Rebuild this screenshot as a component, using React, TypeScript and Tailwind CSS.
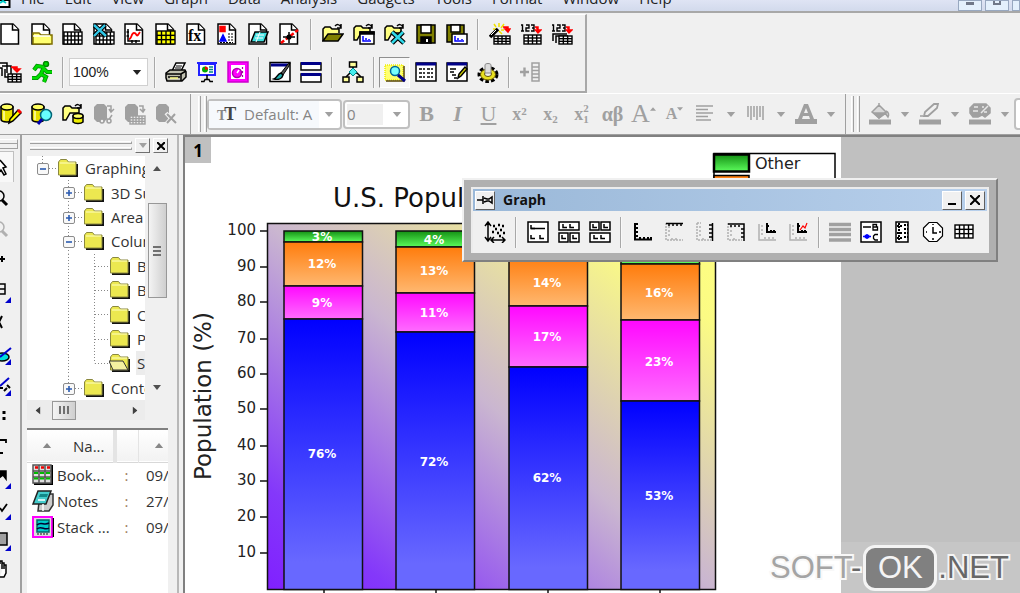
import type { ReactNode } from "react";

/* ---------- icon building blocks ---------- */

type GridProps = { x: number; y: number; w: number; h: number; cols?: number; rows?: number; fill?: string; stroke?: string };

function Grid({ x, y, w, h, cols = 4, rows = 3, fill = "#fff", stroke = "#000" }: GridProps) {
  return (
    <g stroke={stroke} strokeWidth="1.4">
      <rect x={x} y={y} width={w} height={h} fill={fill} />
      {Array.from({ length: cols - 1 }, (_, i) => {
        const px = x + (w / cols) * (i + 1);
        return <path key={"c" + i} d={`M${px} ${y}V${y + h}`} />;
      })}
      {Array.from({ length: rows - 1 }, (_, i) => {
        const py = y + (h / rows) * (i + 1);
        return <path key={"r" + i} d={`M${x} ${py}H${x + w}`} />;
      })}
    </g>
  );
}

function Page({ children }: { children?: ReactNode }) {
  return (
    <>
      <path d="M1 1h12l5.5 5.500V21H1z" fill="#fff" />
      <path d="M12.500 1v6h6" fill="#fff" />
      {children}
    </>
  );
}

const cylinder = (
  <>
    <path d="M1 4v12c0 2 3 3 6 3s6-1 6-3V4z" fill="#e8e000" />
    <ellipse cx="7" cy="4" rx="6" ry="3" fill="#ffff60" />
    <path d="M4 8v9" stroke="#ffffb0" />
  </>
);
const grayCylinder = (
  <path d="M1 4l3-3h7l3 3v12l-3 3H4l-3-3z" fill="#a0a0a0" stroke="none" />
);
const openFolder = (
  <>
    <path d="M1 18V6l2-2h5l2 2h7v4" fill="#ffff80" />
    <path d="M1 18l5-7h15l-5 7z" fill="#808000" />
    <path d="M13 3c2-2 4-2 6 1M19 1v4h-4" />
  </>
);
const yellowFolder = (
  <>
    <path d="M1 17V5l2-2h5l2 2h7v5H8l-4 7z" fill="#ffff80" />
    <path d="M13 3c2-2 4-2 6 1M19 1v4h-4" />
  </>
);
const redArrow = <path d="M15 4h3v4M15.500 7l2.500 3 3-3z" stroke="#f00" fill="#f00" />;
const digits = (
  <path d="M1 2h1.500v6M1 8h3M6 2h3v3H6v3h3.500M11 2h3v6h-3M12 5h2" strokeWidth="1.400" />
);
const axisL = (color: string, x = 3, y = 19) => (
  <path d={`M${x} 3V${y}H20M${x + 2} 5h2M${x + 2} 9h2M${x + 2} 13h2M${x + 6} ${y - 1}v-2M${x + 10} ${y - 1}v-2M${x + 14} ${y - 1}v-2`} stroke={color} />
);
const smallL = (x: number, y: number) => <path d={`M${x} ${y}v3.5h4`} />;

const icons: Record<string, ReactNode> = {
  "New Project": <Page />,
  "New Folder": <Page><path d="M2 10h6l2 2h11v9H2z" fill="#ffff70" stroke="#807000" /><path d="M2 13h17" stroke="#fff" /></Page>,
  "New Workbook": <Page><Grid x={2} y={9} w={18} h={12} cols={5} /></Page>,
  "New Excel": <Page><Grid x={3} y={9} w={18} h={12} cols={5} /><path d="M1 2l12 11M12 2L1 13" stroke="#000" strokeWidth="4.5" /><path d="M1 2l12 11M12 2L1 13" stroke="#30c8e8" strokeWidth="2.4" /></Page>,
  "New Graph": <Page><path d="M4 6v12h12M2.500 9H5M2.500 13H5M8 17v3M12 17v3" /><path d="M5 16c3 0 2-6 5-6s2 4 4 2l2-3" stroke="#f00" strokeWidth="1.800" /></Page>,
  "New Matrix": <Page><Grid x={2} y={8} w={18} h={13} cols={4} fill="#ff0" /></Page>,
  "New Function": <Page><text x="2" y="18" fontSize="16" fontWeight="bold" fontFamily="Liberation Serif, serif" fill="#000" stroke="none">fx</text></Page>,
  "New Layout": <Page><path d="M3 3.500h5v5H3z" fill="#f00" stroke="#f00" /><path d="M3 18l3-6 3 6z" fill="#00f" stroke="#00f" /><path d="M11 11h5M11 14h5M3 19.500h13M11 17h5" strokeDasharray="2 1" strokeWidth="1" /></Page>,
  "New Notes": <Page><path d="M7 9h13l-4 10H3z" fill="#40e0e0" /><path d="M8 12h8M7 15h8M12 9L8 19" stroke="#fff" strokeWidth="1" /></Page>,
  "Digitize": <Page><path d="M2 20L19 7" stroke="#f00" strokeWidth="2.400" strokeDasharray="4 2" /><path d="M10 9v11M4 14h12" /><circle cx="10" cy="14" r="1.800" fill="#000" /></Page>,
  "Open": openFolder,
  "Open Template": <>{yellowFolder}<path d="M7 9h14v12H7z" fill="#fff" /><path d="M7 9h14v2H7z" fill="#000" /><path d="M10 13v5h8M13 17v-2M16 17v-1" stroke="#00f" /></>,
  "Open Excel": <>{yellowFolder}<path d="M8 9l12 11M19 9L8 20" strokeWidth="5" /><path d="M8 9l12 11M19 9L8 20" stroke="#30d8e8" strokeWidth="2.500" /></>,
  "Save Project": <><path d="M2 2h18v18H2z" fill="#808000" /><path d="M6 2h10v8H6z" fill="#fff" /><path d="M6 14h10v6H6z" fill="#000" /><path d="M12 16v3" stroke="#fff" strokeWidth="2" /></>,
  "Save Template": <><path d="M1 2h17v17H1z" fill="#808000" /><path d="M5 2h9v7H5z" fill="#fff" /><path d="M6 11h15v10H6z" fill="#fff" /><path d="M9 13v5h9M12 17v-2M16 17v-1" stroke="#00f" /></>,
  "Import Wizard": <><path d="M5 1l2 3M10 0v4M15 1l-3 4M12 7h3M10 8l3 3M4 6h3" stroke="#f0e000" strokeWidth="1.500" /><path d="M1 14l8-8" strokeWidth="3.500" /><path d="M2 12l5-5" stroke="#fff" strokeWidth="1" /><Grid x={5} y={13} w={16} h={8} cols={4} /><path d="M14 4h5v3M16 6l3 3 2-3z" stroke="#f00" fill="#f00" /></>,
  "Import Single": <>{digits}<Grid x={4} y={12} w={17} h={9} cols={4} />{redArrow}</>,
  "Import Multiple": <>{digits}<path d="M2 18v-7h14" /><path d="M5 20v-7h12" /><Grid x={8} y={13} w={13} h={8} cols={3} />{redArrow}</>,

  "Recalculate": <><path d="M-2 2h9v10M-2 7h4v8M2 5h9v8M5 8v8h4" fill="#fff" /><Grid x={8} y={13} w={13} h={8} cols={3} /><path d="M11 6h6v4M14 8l3 3 3-3z" stroke="#f00" fill="#f00" /></>,
  "Run": <><circle cx="15" cy="3" r="2.500" fill="#0d0" stroke="#080" /><path d="M13 6L6 5 3 9M13 6l-3 7 5 3-2 5M10 13l-4 4H1M13 8l3 3h5" stroke="#080" strokeWidth="4.200" /><path d="M13 6L6 5 3 9M13 6l-3 7 5 3-2 5M10 13l-4 4H1M13 8l3 3h5" stroke="#0d0" strokeWidth="2.600" /></>,
  "Print": <><path d="M7 10l4-8h9l-4 8z" fill="#fff" /><path d="M11 5h6M10 7h6" strokeWidth="1" /><path d="M1 12l4-3h15l1 2v5l-4 4H2l-1-3z" fill="#c0c0b0" /><path d="M1 13h15l5-3M3 16h12M16 13v7" /><path d="M5 17h8" stroke="#ff8" /></>,
  "Slide Show": <><path d="M1 2h20M3 3h16v11H3z" fill="#fff" stroke="#22f" strokeWidth="2" /><circle cx="9" cy="8.500" r="3" fill="#0a0" stroke="none" /><path d="M9 8.500V5.500a3 3 0 013 3z" fill="#f00" stroke="none" /><path d="M13 6h4M13 8.500h4M13 11h4" stroke="#088" /><path d="M11 14v5M5 20.500h3l1-2h4l1 2h3" /></>,
  "Video Builder": <><path d="M1 1h20v20H1z" fill="#f0f" stroke="#c0c" /><path d="M4 4h14v14H4z" fill="#fff" stroke="none" /><circle cx="10" cy="12" r="4.500" fill="#f0f" stroke="#a0a" /><path d="M10 12l2-3" stroke="#fff" /><path d="M15.500 6v2M15.500 10v2M15.500 14v2" stroke="#a0a" strokeWidth="1.200" /></>,
  "Edit Mode": <><path d="M1 1.500h20v19H1z" fill="#fff" /><path d="M2 2.500h18v3H2z" fill="#008" stroke="none" /><path d="M12 12l7-9 2-1-1 3-6 9z" fill="#555" strokeWidth="1" /><path d="M5 18c3-1 3-5 7-6l2 2c-1 4-5 5-9 4z" fill="#20b0b0" /></>,
  "Tile": <><path d="M1 2h20v7H1zM1 13h20v8H1z" fill="#fff" /><path d="M1 2.500h20M1 13.500h20" stroke="#008" strokeWidth="3" /></>,
  "Flow": <><path d="M11 6v9M4 16l4-4h7l4 4" /><path d="M7.500 1h7v5h-7zM1 16h6v5H1zM15 16h6v5h-6z" fill="#ff9" /><path d="M11 7l4 4-4 4-4-4z" fill="#4ee" stroke="#088" strokeWidth="1" /></>,
  "Project Explorer": <><path d="M1 4h18v15H1z" fill="#ffff70" stroke="#ee0" strokeDasharray="1 1" /><path d="M2 20h18V5" stroke="#540" /><circle cx="11" cy="10" r="4.500" fill="#7ff" stroke="#069" /><path d="M14 14l7 6" stroke="#008" strokeWidth="3" /></>,
  "Results Log": <><path d="M1 2h20v18H1z" fill="#fff" /><path d="M1 3h20" stroke="#008" strokeWidth="3" /><path d="M4 8h6M12 8h6M4 12h6M12 12h6M4 16h6M12 16h6" strokeDasharray="3 1" /></>,
  "Script Window": <><path d="M1 2h20v18H1z" fill="#fff" /><path d="M1 3h20" stroke="#008" strokeWidth="3" /><path d="M4 8h6M4 11h4M6 14h4M8 17h3" /><path d="M12 17l1-4 6-7 2 2-6 7z" fill="#cc0" /></>,
  "Code Builder": <><ellipse cx="11" cy="13.500" rx="8.500" ry="6.500" stroke="#000" strokeWidth="4" strokeDasharray="3.400 2" /><ellipse cx="11" cy="13.500" rx="7.500" ry="5.500" fill="#e8e020" stroke="#665500" strokeWidth="1" /><ellipse cx="11" cy="13" rx="3.500" ry="2.500" fill="#eee" stroke="#665500" strokeWidth="1" /><path d="M8 4c0-2 6-2 6 0v8H8z" fill="#ddd" stroke="#888" strokeWidth="1" /></>,
  "Add Columns": <g stroke="#a0a0a0"><path d="M1 11h9M5.500 6.500v9" strokeWidth="2.400" /><path d="M13 2h7v18h-7zM13 6h7M13 9.500h7M13 13h7M13 16.500h7" /></g>,

  "Edit Data": <>{cylinder}<path d="M9 20l1-4 8-9 3 3-8 8z" fill="#ff0" /><path d="M18 7l3 3" stroke="#f00" strokeWidth="3" /></>,
  "Find Data": <>{cylinder}<circle cx="15" cy="12" r="5.500" fill="#6ff" stroke="#067" /><path d="M11 16l-4 5" stroke="#00a" strokeWidth="3" /></>,
  "Open Data": <>{yellowFolder}<path d="M11 13v6c2 2 8 2 10 0v-6z" fill="#ee0" /><ellipse cx="16" cy="13" rx="5" ry="2.500" fill="#ff6" /></>,
  "Link Data": <>{grayCylinder}<path d="M14 3h4v5M16 6l2 3 3-3M8 18l4-6 3 6 4-6" stroke="#a0a0a0" /><circle cx="9" cy="18" r="2" fill="#f0f0f0" stroke="#a0a0a0" /><circle cx="16" cy="18" r="2" fill="#f0f0f0" stroke="#a0a0a0" /></>,
  "Import Table": <>{grayCylinder}<Grid x={6} y={13} w={15} h={8} cols={5} stroke="#a0a0a0" fill="#f0f0f0" /><path d="M15 3h4v5M16 6l3 3 2-3" stroke="#a0a0a0" /></>,
  "Remove Data": <>{grayCylinder}<path d="M11 10l10 11M20 11L11 21" stroke="#f0f0f0" strokeWidth="4" /><path d="M12 11l9 9M20 11l-8 9" stroke="#a0a0a0" strokeWidth="2" /></>,

  "Rescale": <><path d="M4 2v17M1 5l3-4 3 4M1 16l3 4 3-4M7 19h14M18 16l3 3-3 3M10 16l-3 3 3 3" /><path d="M9 5h2M14 4h2M18 5h2M11 8h2M16 9h2M8 11h2M13 12h2M19 12h2M15 15h2" strokeWidth="2.500" /></>,
  "One Over Two": <><path d="M1 1h20v20H1z" fill="#fff" />{smallL(4, 4)}<path d="M4 7.500h14" />{smallL(4, 14)}{smallL(13, 14)}</>,
  "Wide Top": <><path d="M1 1h20v8H1zM1 12h9v9H1zM12 12h9v9h-9z" fill="#fff" />{smallL(5, 3)}{smallL(12, 3)}{smallL(4, 14)}{smallL(15, 14)}</>,
  "Wide Bottom": <><path d="M1 1h9v8H1zM12 1h9v8h-9zM1 12h20v9H1z" fill="#fff" />{smallL(4, 3)}{smallL(15, 3)}{smallL(5, 14)}{smallL(12, 14)}</>,
  "Bottom Left Axes": <path d="M3 2v16.500h17M4 3h2M4 7h2M4 11h2M4 15h2M8 18v-2M12 18v-2M16 18v-2M19 18v-2" strokeWidth="2" />,
  "Top Axis": <><path d="M3 2v17h17M5 6h2M5 10h2M5 14h2M9 17v2M13 17v2" stroke="#b0b0b0" strokeDasharray="2 1" /><path d="M3 2.500h17M6 3v2M10 3v2M14 3v2M18 3v2" strokeWidth="1.500" /></>,
  "Right Axis": <><path d="M3 2v17h14M3 2h4M5 6h2M5 10h2M5 14h2M9 17v2" stroke="#b0b0b0" strokeDasharray="2 1" /><path d="M18.500 2v18M15 4h3M15 8h3M15 12h3M15 16h3" strokeWidth="1.500" /></>,
  "Top Right Axes": <><path d="M3 2v17h14M5 6h2M5 10h2M5 14h2M9 17v2" stroke="#b0b0b0" strokeDasharray="2 1" /><path d="M3 3h16v17M6 4v2M10 4v2M14 4v2M16 8h3M16 12h3M16 16h3" strokeWidth="1.500" /></>,
  "Inset Axes": <>{axisL("#b0b0b0")}<path d="M11 2v9h9M11 5h2M15 9v2M18 9v2" strokeWidth="2" /></>,
  "Inset Plot": <>{axisL("#b0b0b0")}<path d="M11 2v9h9M11 5h2M15 9v2M18 9v2" strokeWidth="2" /><path d="M13 9l3-4 2 2 2-5" stroke="#f00" strokeWidth="1.200" /></>,
  "Merge": <path d="M0 3.500h22M0 8.500h22M0 13.500h22M0 19h22" stroke="#a0a0a0" strokeWidth="3.500" />,
  "New Legend": <><path d="M1 1h20v20H1z" fill="#fff" /><path d="M3 6h8" strokeWidth="1.500" /><path d="M3 15.500h8M7 13v5M5.500 14.500h3v2h-3z" stroke="#00f" strokeWidth="1.500" /><path d="M13 3.500h3.500v2.500H13zM13 6h4.500v3H13z" strokeWidth="1.300" /><path d="M18 13.500h-3l-1.500 1.500v2.500l1.500 1.500h3" strokeWidth="1.300" /></>,
  "Color Scale": <><path d="M5 1h12v20H5z" fill="#fff" /><path d="M8 2v18M13 4h4M13 8h4M13 12h4M13 16h4M6 5h5M6 12h5M6 17h5" strokeWidth="2" strokeDasharray="2 1" /></>,
  "Date and Time": <><path d="M7 1.500h8l5.500 5.500v8L15 20.500H7L1.500 15V7z" fill="#fff" strokeWidth="1.200" /><path d="M11 6v6h4M11 3v1M11 17v2M4 11h1M17 11h2" /></>,
  "New Table": <Grid x={2} y={4} w={18} h={13} cols={4} rows={3} />,

  "Fill Color": <g stroke="#a0a0a0"><path d="M3 9l7-7 7 7-7 6zM10 2V0M17 8c3 1 3 4 2 6l-3-4" fill="#d8d8d8" /><path d="M5 10h12l-7 5z" fill="#a0a0a0" /><path d="M0 19h22" strokeWidth="5" /></g>,
  "Line Color": <g stroke="#a0a0a0"><path d="M5 13l1-4 9-8h4l-1 4-9 8z" fill="#f0f0f0" strokeWidth="1.800" /><path d="M1 13h3" /><path d="M0 19h22" strokeWidth="5" /></g>,
  "Palette": <g stroke="#a0a0a0"><path d="M5 1h12l4 4v5l-5 4-3-2-4 2H4L1 10V5z" fill="#a0a0a0" /><path d="M5 4h4M4 8h5M12 10l7-7M13 4h2M15 9h3" stroke="#e8e8e8" /><path d="M0 19h22" strokeWidth="5" /></g>,
  "Font Color": <g stroke="none" fill="#a0a0a0"><path d="M9 1h4l6 15h-4l-1-3H8l-1 3H3zM9 10h4l-2-5z" fillRule="evenodd" /><path d="M0 16h22v5H0z" /></g>,
  "Align": <path d="M1 3h17M1 6.500h12M1 10h17M1 13.500h12M1 17h15" stroke="#a0a0a0" />,
  "Spacing": <path d="M3 3v11M6 3v14M9 3v11M12 3v14M15 3v11M18 3v14" stroke="#a0a0a0" />,
};

function Icon({ name }: { name: string }) {
  return (
    <svg className="size-[22px] shrink-0" viewBox="0 0 22 22" fill="none" stroke="#000" strokeWidth="1.5" aria-hidden="true">
      {icons[name]}
    </svg>
  );
}

function ToolButton({ name, pressed = false, children }: { name: string; pressed?: boolean; children?: ReactNode }) {
  return (
    <button
      type="button"
      aria-label={name}
      className={
        pressed
          ? "flex h-[31px] w-[31px] shrink-0 items-center justify-center border border-t-[#909090] border-l-[#909090] border-r-white border-b-white bg-[#f8f8f8]"
          : "flex h-[31px] w-[31px] shrink-0 items-center justify-center"
      }
    >
      {children ?? <Icon name={name} />}
    </button>
  );
}

const Tools = ({ names }: { names: string[] }) => <>{names.map((n) => <ToolButton key={n} name={n} />)}</>;

function Sep({ narrow = false }: { narrow?: boolean }) {
  return (
    <span className={narrow ? "flex w-[11px] shrink-0 justify-center" : "flex w-3 shrink-0 justify-center"}>
      <span className="h-[31px] w-0.5 border-r border-l border-l-[#a8a8a8] border-r-[#f8f8f8]" />
    </span>
  );
}

function Triangle({ className }: { className: string }) {
  return (
    <svg className={className} viewBox="0 0 10 6" aria-hidden="true">
      <path d="M0 0h10L5 6z" fill="currentColor" />
    </svg>
  );
}

function DropTool({ name }: { name: string }) {
  return (
    <div className="flex shrink-0 items-center">
      <ToolButton name={name} />
      <button type="button" aria-label={name + " options"} className="flex h-[31px] w-[19px] items-center justify-center text-[#a0a0a0]">
        <Triangle className="h-[5px] w-[10px]" />
      </button>
    </div>
  );
}

function Grip() {
  return (
    <span className="flex shrink-0 gap-[3px] self-stretch py-0.5">
      <span className="w-[3px] border-r border-l border-l-white border-r-[#a0a0a0]" />
      <span className="w-[3px] border-r border-l border-l-white border-r-[#a0a0a0]" />
    </span>
  );
}

/* ---------- header ---------- */

const menus = ["File", "Edit", "View", "Graph", "Data", "Analysis", "Gadgets", "Tools", "Format", "Window", "Help"];

function MenuBar() {
  return (
    <nav className="flex h-[13px] shrink-0 items-end overflow-hidden border-b-2 border-[#a8a8a8] bg-gradient-to-b from-[#dfe4f4] to-[#d2daec]">
      <svg className="h-[11px] w-[11px]" viewBox="0 0 11 11" aria-hidden="true">
        <path d="M0 0h9.500v7H0" fill="#fff" stroke="#000" strokeWidth="2" />
        <path d="M0 3l3-2 3 2" stroke="#0cc" strokeWidth="2" fill="none" />
      </svg>
      <div className="flex gap-5 pb-[3px] pl-[10px] text-[15px] leading-5">
        {menus.map((m) => (
          <button type="button" key={m}>{m}</button>
        ))}
      </div>
      <div className="ml-auto flex gap-[3px]">
        {["Minimize", "Restore", "Close"].map((n, i) => (
          <button type="button" key={n} aria-label={n} className={i === 2 ? "h-[11px] w-2 border border-[#98a8c0] bg-[#e4f0fc]" : "flex h-[11px] w-6 justify-center border border-[#98a8c0] bg-[#e4f0fc]"}>
            {i === 0 && <span className="mt-px h-[3px] w-2 bg-[#707888]" />}
            {i === 1 && <span className="h-1 w-2 border-2 border-t-0 border-[#707888]" />}
          </button>
        ))}
      </div>
    </nav>
  );
}

function MainToolbars() {
  return (
    <div className="mt-px w-[587px] shrink-0 border-r-2 border-b-2 border-[#a8a8a8] border-t border-t-white">
      <div className="-ml-[5px] flex h-[38px] items-center">
        <Tools names={["New Project", "New Folder", "New Workbook", "New Excel", "New Graph", "New Matrix", "New Function", "New Layout", "New Notes", "Digitize"]} />
        <Sep />
        <Tools names={["Open", "Open Template", "Open Excel", "Save Project", "Save Template"]} />
        <Sep />
        <Tools names={["Import Wizard", "Import Single", "Import Multiple"]} />
      </div>
      <div className="-ml-[5px] flex h-[38px] items-center">
        <Tools names={["Recalculate", "Run"]} />
        <Sep narrow />
        <label className="relative mx-px flex h-7 w-[79px] shrink-0 items-center">
          <select aria-label="Zoom" className="h-full w-full appearance-none border border-[#d0d0d0] bg-white pl-[3px] font-['Liberation_Sans',sans-serif] text-sm text-[#222]">
            <option>100%</option>
          </select>
          <Triangle className="pointer-events-none absolute right-1.5 h-[5px] w-[10px]" />
        </label>
        <Sep narrow />
        <Tools names={["Print", "Slide Show", "Video Builder"]} />
        <Sep narrow />
        <Tools names={["Edit Mode", "Tile"]} />
        <Sep narrow />
        <Tools names={["Flow"]} />
        <Sep narrow />
        <ToolButton name="Project Explorer" pressed />
        <Tools names={["Results Log", "Script Window", "Code Builder"]} />
        <Sep narrow />
        <Tools names={["Add Columns"]} />
      </div>
    </div>
  );
}

function FormatBar() {
  const serif = "font-['Liberation_Serif',serif] text-[#a0a0a0] font-bold";
  return (
    <div className="flex h-[41px] shrink-0 items-center overflow-hidden border-t border-white">
      <div className="-ml-[5px] flex w-[196px] shrink-0 items-center self-stretch border-r border-[#a0a0a0]">
        <Tools names={["Edit Data", "Find Data", "Open Data", "Link Data", "Import Table", "Remove Data"]} />
      </div>
      <div className="flex shrink-0 items-center self-stretch border-r border-[#a0a0a0] pr-[5px] pl-[7px]">
        <Grip />
        <label className="relative flex h-[31px] w-[135px] items-center rounded-sm border-2 border-[#c0c0c0] bg-white">
          <span className="pointer-events-none absolute left-2 font-['Liberation_Serif',serif] text-[#444]">
            <b className="text-sm text-[#888]">T</b><b className="-ml-0.5 text-lg">T</b>
          </span>
          <select aria-label="Font" className="h-full w-[110px] appearance-none overflow-hidden bg-[#f6f9fc] pl-[35px] text-[15px] text-[#858585]">
            <option>Default: A</option>
          </select>
          <Triangle className="pointer-events-none absolute right-1.5 h-[5px] w-[10px] text-[#a0a0a0]" />
        </label>
        <label className="relative ml-px flex h-[29px] w-[67px] items-center rounded-sm border-2 border-[#c0c0c0] bg-white">
          <select aria-label="Font size" className="m-0.5 h-[21px] w-9 appearance-none bg-[#f0f0f0] text-[15px] leading-5 text-[#858585]">
            <option>0</option>
          </select>
          <Triangle className="pointer-events-none absolute right-1.5 h-[5px] w-[10px] text-[#a0a0a0]" />
        </label>
        <div className={"ml-px flex items-center text-[22px] leading-none " + serif}>
          <ToolButton name="Bold"><b>B</b></ToolButton>
          <ToolButton name="Italic"><i>I</i></ToolButton>
          <ToolButton name="Underline"><u className="font-normal">U</u></ToolButton>
          <ToolButton name="Superscript"><span className="text-lg">x<sup className="text-[11px]">2</sup></span></ToolButton>
          <ToolButton name="Subscript"><span className="text-lg">x<sub className="text-[11px]">2</sub></span></ToolButton>
          <ToolButton name="Super and subscript">
            <span className="text-lg">x</span>
            <span className="flex flex-col text-[11px] leading-[11px]"><span>2</span><span>1</span></span>
          </ToolButton>
          <ToolButton name="Greek"><span className="text-xl">αβ</span></ToolButton>
          <ToolButton name="Increase font">
            <span className="text-[26px] font-normal">A</span><Triangle className="mt-2 h-1 w-1.5 rotate-180 self-start" />
          </ToolButton>
          <ToolButton name="Decrease font">
            <span className="text-base">A</span><Triangle className="mt-2 h-1 w-1.5 self-start" />
          </ToolButton>
        </div>
        <DropTool name="Align" />
        <DropTool name="Spacing" />
        <DropTool name="Font Color" />
      </div>
      <div className="flex shrink-0 items-center self-stretch pl-[5px]">
        <Grip />
        <span className="w-1" />
        <DropTool name="Fill Color" />
        <DropTool name="Line Color" />
        <DropTool name="Palette" />
        <span className="h-8 w-4 rounded-sm border-2 border-[#c0c0c0] bg-white" />
      </div>
    </div>
  );
}

/* ---------- left side ---------- */

const corner = <path d="M11 27V21L5 27z" fill="#00c" stroke="none" />;
const paletteTools: [string, ReactNode][] = [
  ["Pointer", <path d="M0 8l6 7-3 1 3 6-2 1-3-5-1 2" fill="#fff" />],
  ["Zoom in", <><circle cx="-1" cy="13" r="5" /><path d="M2 17l5 5" strokeWidth="3" /></>],
  ["Zoom out", <g stroke="#b0b0b0"><circle cx="-1" cy="13" r="5" /><path d="M2 17l5 5" strokeWidth="3" /></g>],
  ["Reader", <path d="M0 14h5M2 11v6" strokeWidth="2" />],
  ["Selector", <><path d="M-2 8h7v10h-7M0 13h5" />{corner}</>],
  ["Cursor", <path d="M2 9l-3 6 3 6" strokeWidth="2" />],
  ["Mask", <><ellipse cx="2" cy="19" rx="7" ry="4" fill="#0dd" /><path d="M0 19L11 10" stroke="#00c" strokeWidth="2" />{corner}</>],
  ["Region", <><path d="M0 19h3M4 22l3-3M7 16l3 3" strokeWidth="2" /><path d="M0 17L9 9" stroke="#00c" strokeWidth="2" />{corner}</>],
  ["Draw data", <path d="M4 11v3M4 17v3" strokeWidth="3" />],
  ["Text", <path d="M0 9h6v3M-1 22h4" strokeWidth="1.800" />],
  ["Arrow", <><path d="M0 9h6v8l-3-4-4 3z" fill="#000" />{corner}</>],
  ["Line", <><path d="M0 15l2 3 5-7" strokeWidth="1.800" />{corner}</>],
  ["Rectangle", <><path d="M-2 9h9v12h-9z" fill="#a0a0a0" />{corner}</>],
  ["Hand", <path d="M0 9V6h2v8M2 8h2v6M4 10h2v8l-2 4H0" fill="#fff" />],
];

function ToolPalette() {
  return (
    <aside className="flex w-[22px] shrink-0 flex-col overflow-hidden border-r-2 border-[#a0a0a0] pt-1">
      <span className="h-[5px] w-[18px] border-r border-b border-t border-t-white border-[#a0a0a0]" />
      <span className="mb-0.5 h-[5px] w-[18px] border-r border-b border-[#a0a0a0]" />
      {paletteTools.map(([name, art], i) => (
        <button type="button" key={name} aria-label={name} className={i === 0 ? "h-[31px] w-[14px] shrink-0 border-t border-r border-[#c0c0c0] bg-[#f8f8f8]" : "h-[31px] w-[14px] shrink-0"}>
          <svg className="h-[30px] w-[13px]" viewBox="0 0 13 30" fill="none" stroke="#000" strokeWidth="1.5" aria-hidden="true">{art}</svg>
        </button>
      ))}
    </aside>
  );
}

type TreeRow = { label: string; level: number; box?: "+" | "-"; open?: boolean };
const tree: TreeRow[] = [
  { label: "Graphing", level: 0, box: "-" },
  { label: "3D Surface", level: 1, box: "+" },
  { label: "Area", level: 1, box: "+" },
  { label: "Column", level: 1, box: "-" },
  { label: "Bar", level: 2 },
  { label: "Bar", level: 2 },
  { label: "Column", level: 2 },
  { label: "Pie", level: 2 },
  { label: "Stack", level: 2, open: true },
  { label: "Contour", level: 1, box: "+" },
];

function Guide({ down = true, across = false, box }: { down?: boolean; across?: boolean; box?: "+" | "-" }) {
  return (
    <svg className="h-full w-[26px] shrink-0" aria-hidden="true">
      <g stroke="#888" strokeDasharray="1 2" fill="none">
        <line x1="12.500" y1="0" x2="12.500" y2={down ? "100%" : "50%"} />
        {across && <line x1="13" y1="12.500" x2="26" y2="12.500" />}
      </g>
      {box && (
        <g stroke="#8c8c8c">
          <rect x="7.500" y="7.500" width="11" height="11" rx="1.500" fill="#f8f8f8" />
          <path d={box === "+" ? "M10 13h6M13 10v6" : "M10 13h6"} stroke="#2a5ab0" strokeWidth="1.600" />
        </g>
      )}
    </svg>
  );
}

function FolderIcon({ open }: { open?: boolean }) {
  return (
    <svg className="ml-px h-5 w-[22px] shrink-0" viewBox="0 0 22 20" aria-hidden="true">
      <path d="M3 18h17V6" fill="none" stroke="#111" strokeWidth="2" />
      <path d="M1.500 17V4l2-2.500h6l2 2.500h7.500v13z" fill="#ece850" stroke="#8a8840" />
      <path d="M3 5h15" stroke="#ffffc0" />
      {open && <path d="M0 8h14l5 9H4z" fill="#f4f0a0" stroke="#333" />}
    </svg>
  );
}

const scrollThumb = "border border-[#989898] bg-gradient-to-r from-[#f4f4f4] to-[#cfcfcf]";

function ProjectPanel() {
  return (
    <section className="ml-0.5 flex w-[155px] shrink-0 flex-col border-r-2 border-[#b8b8b8] pr-[9px] pl-[3px]">
      <header className="flex h-[21px] shrink-0 items-center gap-[3px] pl-[3px]">
        <span className="flex flex-1 flex-col gap-[3px]">
          <span className="h-[3px] border-r border-b border-t border-t-white border-[#a0a0a0]" />
          <span className="h-[3px] border-r border-b border-t border-t-white border-[#a0a0a0]" />
        </span>
        <button type="button" aria-label="Panel menu" className="flex h-[15px] w-[15px] items-center justify-center border border-t-white border-l-white border-r-[#707070] border-b-[#707070] text-[#a0a0a0]">
          <Triangle className="h-[5px] w-2" />
        </button>
        <button type="button" aria-label="Close panel" className="flex h-[15px] w-[15px] items-center justify-center border border-t-white border-l-white border-r-[#707070] border-b-[#707070]">
          <svg className="size-2" viewBox="0 0 8 8"><path d="M0 0l8 8M8 0L0 8" stroke="#000" strokeWidth="2" /></svg>
        </button>
      </header>
      <div className="flex h-[244px] shrink-0">
        <ul className="grid min-w-0 flex-1 grid-rows-10 overflow-hidden bg-white pl-[3px] text-[15px] leading-6 text-[#333]">
          {tree.map((row, i) => (
            <li key={i} className="flex items-center whitespace-nowrap">
              {row.level === 1 && <span className="w-[26px] shrink-0" />}
              {row.level === 2 && <><span className="w-[26px] shrink-0" /><Guide /></>}
              <Guide box={row.box} across down={!(row.open || row.level === 0)} />
              <FolderIcon open={row.open} />
              <span className={row.open ? "ml-[5px] bg-[#ececec] pl-px" : "ml-1.5"}>{row.label}</span>
            </li>
          ))}
        </ul>
        <div className="mr-px ml-0.5 flex w-5 flex-col items-center bg-[#f0f0f0] text-[#505050]">
          <Triangle className="mt-[10px] h-[5px] w-2 rotate-180" />
          <span className={"mt-8 flex h-[95px] w-[19px] flex-col items-center justify-center gap-0.5 " + scrollThumb}>
            <span className="h-0.5 w-2 bg-[#707070]" />
            <span className="h-0.5 w-2 bg-[#707070]" />
            <span className="h-0.5 w-2 bg-[#707070]" />
          </span>
          <Triangle className="mt-auto mb-[10px] h-[5px] w-2" />
        </div>
      </div>
      <div className="mr-[23px] flex h-5 shrink-0 items-center bg-[#ececec] pl-[7px] text-[#404040]">
        <Triangle className="h-[5px] w-2 rotate-90" />
        <span className={"ml-[10px] flex h-[19px] w-6 items-center justify-center gap-0.5 " + scrollThumb}>
          <span className="h-2 w-0.5 bg-[#707070]" />
          <span className="h-2 w-0.5 bg-[#707070]" />
          <span className="h-2 w-0.5 bg-[#707070]" />
        </span>
        <Triangle className="mr-[6px] ml-auto h-[5px] w-2 -rotate-90" />
      </div>
      <div className="mt-2 flex-1 overflow-hidden border-t-2 border-[#808080] bg-white">
        <table className="w-[160px] table-fixed border-collapse text-[15px] leading-5 text-[#333]">
          <thead>
            <tr className="h-8 border-b border-[#d8d8d8] bg-gradient-to-b from-white to-[#f2f2f2]">
              <th className="w-[88px] border-r border-[#ddd] p-0 font-normal">
                <span className="flex items-center pl-[15px] text-[#888]">
                  <Triangle className="h-[5px] w-[10px] rotate-180" />
                  <span className="ml-[21px] text-[#333]">Na...</span>
                </span>
              </th>
              <th className="w-[23px] border-r border-l-4 border-[#e4e4e4] p-0" aria-label="Kind" />
              <th className="p-0 text-[#888]" aria-label="Modified"><Triangle className="ml-[15px] h-[5px] w-[10px] rotate-180" /></th>
            </tr>
          </thead>
          <tbody>
            {([["Book...", "09/"], ["Notes", "27/"], ["Stack ...", "09/"]] as const).map(([name, date], i) => (
              <tr key={name} className="h-[26px]">
                <td className="p-0 pl-[5px]">
                  <span className="flex items-center gap-[3px] whitespace-nowrap"><FileIcon kind={i} />{name}</span>
                </td>
                <td className="p-0 text-center text-[#a08060]">:</td>
                <td className="p-0 pl-2">{date}</td>
              </tr>
            ))}
          </tbody>
        </table>
      </div>
    </section>
  );
}

function FileIcon({ kind }: { kind: number }) {
  return (
    <svg className="size-[22px] shrink-0" viewBox="0 0 22 22" fill="none" strokeWidth="1.5" aria-hidden="true">
      {kind === 0 && (
        <>
          <path d="M1 1h20v20H2z" fill="#000" />
          <path d="M1 1h18v18H1z" fill="#ddd" stroke="#555" />
          <path d="M1 7h18M1 13h18M7 1v18M13 1v18" stroke="#555" />
          <path d="M3 3.500h3M9 3.500h3M15 3.500h3" stroke="#e00" strokeWidth="2.500" />
          <path d="M2 9h4M8 9h4M14 9h4M2 14.500h4M8 14.500h4M14 14.500h4" stroke="#0b0" strokeWidth="2" />
        </>
      )}
      {kind === 1 && (
        <>
          <path d="M8 4h13v11l-4 6H6z" fill="#ccc" stroke="#333" />
          <path d="M6 1h13l-5 13H1z" fill="#4cc" stroke="#222" />
          <path d="M8 4h8l-1 3H7z" fill="#188" />
          <path d="M6 10h7M11 14v7" stroke="#fff" />
        </>
      )}
      {kind === 2 && (
        <>
          <path d="M1 1h19v20H1z" fill="#ddd" stroke="#f0f" strokeWidth="2" />
          <path d="M21.500 2v19" stroke="#000" />
          <path d="M5 4h12v12H5z" fill="#0cc" stroke="#066" />
          <path d="M5 9c4-4 7 1 12-2M5 13c4-4 8 2 12-1" stroke="#003" />
          <path d="M5 18h12" stroke="#555" strokeDasharray="2 1" />
        </>
      )}
    </svg>
  );
}

/* ---------- graph ---------- */

type Segment = { top: number; fill: string; label: string; labelY: number };
const bars: { x: number; segments: Segment[] }[] = [
  { x: 284, segments: [
    { top: 231, fill: "green", label: "3%", labelY: 241 },
    { top: 242, fill: "orange", label: "12%", labelY: 268 },
    { top: 286, fill: "magenta", label: "9%", labelY: 307 },
    { top: 319, fill: "blue", label: "76%", labelY: 458 },
  ] },
  { x: 396, segments: [
    { top: 231, fill: "green", label: "4%", labelY: 244 },
    { top: 247, fill: "orange", label: "13%", labelY: 275 },
    { top: 293, fill: "magenta", label: "11%", labelY: 317 },
    { top: 332, fill: "blue", label: "72%", labelY: 466 },
  ] },
  { x: 509, segments: [
    { top: 231, fill: "green", label: "", labelY: 244 },
    { top: 255, fill: "orange", label: "14%", labelY: 287 },
    { top: 306, fill: "magenta", label: "17%", labelY: 341 },
    { top: 367, fill: "blue", label: "62%", labelY: 482 },
  ] },
  { x: 621, segments: [
    { top: 231, fill: "green", label: "", labelY: 244 },
    { top: 264, fill: "orange", label: "16%", labelY: 297 },
    { top: 320, fill: "magenta", label: "23%", labelY: 366 },
    { top: 401, fill: "blue", label: "53%", labelY: 500 },
  ] },
];
const gradients: [string, string, string][] = [
  ["green", "#149014", "#5cfc5c"],
  ["orange", "#ff7c0c", "#ffb870"],
  ["magenta", "#ff08ff", "#ff6cff"],
  ["blue", "#0000ff", "#6868ff"],
];
const ticks: [number, number][] = [[100, 231], [90, 267], [80, 302], [70, 339], [60, 374], [50, 409], [40, 446], [30, 481], [20, 517], [10, 553]];

function PopulationChart() {
  return (
    <svg className="block h-[457px] w-[656px]" viewBox="185 137 656 457" fontFamily="DejaVu Sans, sans-serif" role="img" aria-label="U.S. Population">
      <defs>
        {gradients.map(([id, a, b]) => (
          <linearGradient key={id} id={id} x1="0" y1="0" x2="0" y2="1">
            <stop offset="0" stopColor={a} /><stop offset={id === "blue" ? "0.9" : "1"} stopColor={b} />
          </linearGradient>
        ))}
        <linearGradient id="backdrop" x1="0" y1="1" x2="1" y2="0">
          <stop offset="0" stopColor="#8020ff" /><stop offset="0.14" stopColor="#8438fa" /><stop offset="0.5" stopColor="#cab6d0" /><stop offset="0.86" stopColor="#fbfb84" /><stop offset="1" stopColor="#ffff80" />
        </linearGradient>
      </defs>
      <text x="333" y="207" fontSize="26" fill="#111">U.S. Population</text>
      <text transform="translate(211 480) rotate(-90)" fontSize="23" fill="#222">Population (%)</text>
      <g stroke="#111" strokeWidth="1.5">
        <rect x="267.500" y="223.500" width="448" height="366" fill="url(#backdrop)" />
        {ticks.map(([v, y]) => <path key={v} d={`M260 ${y}h7`} />)}
        {[324, 436, 548, 660].map((x) => <path key={x} d={`M${x} 590v4`} />)}
        {bars.map((bar) => bar.segments.map((s, i) => (
          <rect key={bar.x + s.fill} x={bar.x} y={s.top} width="78.500" height={(bar.segments[i + 1]?.top ?? 589.5) - s.top} fill={`url(#${s.fill})`} />
        )))}
      </g>
      <g fontSize="15" fill="#222" textAnchor="end">
        {ticks.map(([v, y]) => <text key={v} x="256" y={y + 4}>{v}</text>)}
      </g>
      <g fontSize="12" fontWeight="bold" fill="#fff" textAnchor="middle">
        {bars.map((bar) => bar.segments.map((s) => <text key={bar.x + s.fill} x={bar.x + 38} y={s.labelY}>{s.label}</text>))}
      </g>
      <g stroke="#000" strokeWidth="1.5">
        <rect x="714" y="153.500" width="121" height="70" fill="#fff" />
        <rect x="714" y="154.500" width="35" height="17" fill="url(#green)" strokeWidth="2.500" />
        <rect x="714" y="175.500" width="35" height="17" fill="url(#orange)" strokeWidth="1.500" />
      </g>
      <g fontSize="16" fill="#222"><text x="755" y="169">Other</text><text x="755" y="190">Black</text></g>
    </svg>
  );
}

function GraphWindow() {
  return (
    <main className="ml-1 grid min-w-0 flex-1 grid-cols-[minmax(0,656px)_1fr] overflow-hidden border-t-2 border-l-2 border-[#808080] bg-[#c0c0c0]">
      <div className="relative overflow-hidden bg-white">
        <PopulationChart />
        <button type="button" className="absolute top-0 left-0 h-[26px] w-[26px] bg-[#c0c0c0] text-[17px] leading-none font-bold text-black">1</button>
      </div>
    </main>
  );
}

function GraphToolbar() {
  const caption = "flex h-[19px] w-5 items-center justify-center border border-t-white border-l-white border-r-[#606060] border-b-[#606060] bg-[#f0f0f0]";
  return (
    <section aria-label="Graph toolbar" className="absolute top-[178px] left-[462px] w-[536px] border-2 border-t-[#f0f0f0] border-l-[#f0f0f0] border-r-[#808080] border-b-[#808080] bg-[#b0b0b0] p-[7px]">
      <div className="border-t-2 border-l-2 border-[#ececec] bg-[#f0f0f0] pr-0.5">
        <header className="flex h-[22px] items-center bg-gradient-to-r from-[#9ab8d8] to-[#b8d0ec] px-0.5">
          <button type="button" aria-label="Pin" className={caption}>
            <svg className="h-[10px] w-4" viewBox="0 0 16 10"><path d="M0 5h6M6 1v8M7 3l3 1h2l3-2v6l-3-2h-2l-3 1" fill="none" stroke="#000" strokeWidth="1.500" /></svg>
          </button>
          <h2 className="ml-2 text-sm leading-5 font-bold text-[#111]">Graph</h2>
          <button type="button" aria-label="Minimize toolbar" className={caption + " ml-auto"}>
            <span className="mt-2 h-0.5 w-2 bg-black" />
          </button>
          <button type="button" aria-label="Close toolbar" className={caption + " ml-[3px]"}>
            <svg className="size-[10px]" viewBox="0 0 10 10"><path d="M0 0l10 10M10 0L0 10" stroke="#000" strokeWidth="2" /></svg>
          </button>
        </header>
        <div className="flex h-[42px] items-center pl-[6px]">
          <Tools names={["Rescale"]} />
          <Sep />
          <Tools names={["One Over Two", "Wide Top", "Wide Bottom"]} />
          <Sep />
          <Tools names={["Bottom Left Axes", "Top Axis", "Right Axis", "Top Right Axes", "Inset Axes", "Inset Plot"]} />
          <Sep narrow />
          <Tools names={["Merge", "New Legend", "Color Scale", "Date and Time", "New Table"]} />
        </div>
      </div>
    </section>
  );
}

function Watermark() {
  return (
    <div className="absolute right-0 bottom-0 flex h-[51px] w-[258px] items-center bg-white/10 pl-2 font-['Liberation_Sans',sans-serif] text-[31px] leading-none">
      <span className="text-[#a4a4a4] [-webkit-text-stroke:4px_#f8f8f8] [paint-order:stroke_fill]">SOFT<span className="text-[#686868]">-</span></span>
      <span className="ml-0.5 flex h-[46px] w-[74px] items-center justify-center rounded-xl border-3 border-[#f4f4f4] bg-[#808080] text-[#f4f4f4]">OK</span>
      <span className="ml-px text-[#686868] [-webkit-text-stroke:4px_#f4f4f4] [paint-order:stroke_fill]">.NET</span>
    </div>
  );
}

export default function App() {
  return (
    <div className="relative flex h-screen flex-col overflow-hidden bg-[#f0f0f0] font-['Open_Sans',sans-serif] text-[#222]">
      <MenuBar />
      <MainToolbars />
      <FormatBar />
      <div className="flex min-h-0 flex-1 border-t border-[#a0a0a0]">
        <ToolPalette />
        <ProjectPanel />
        <GraphWindow />
      </div>
      <GraphToolbar />
      <Watermark />
    </div>
  );
}
